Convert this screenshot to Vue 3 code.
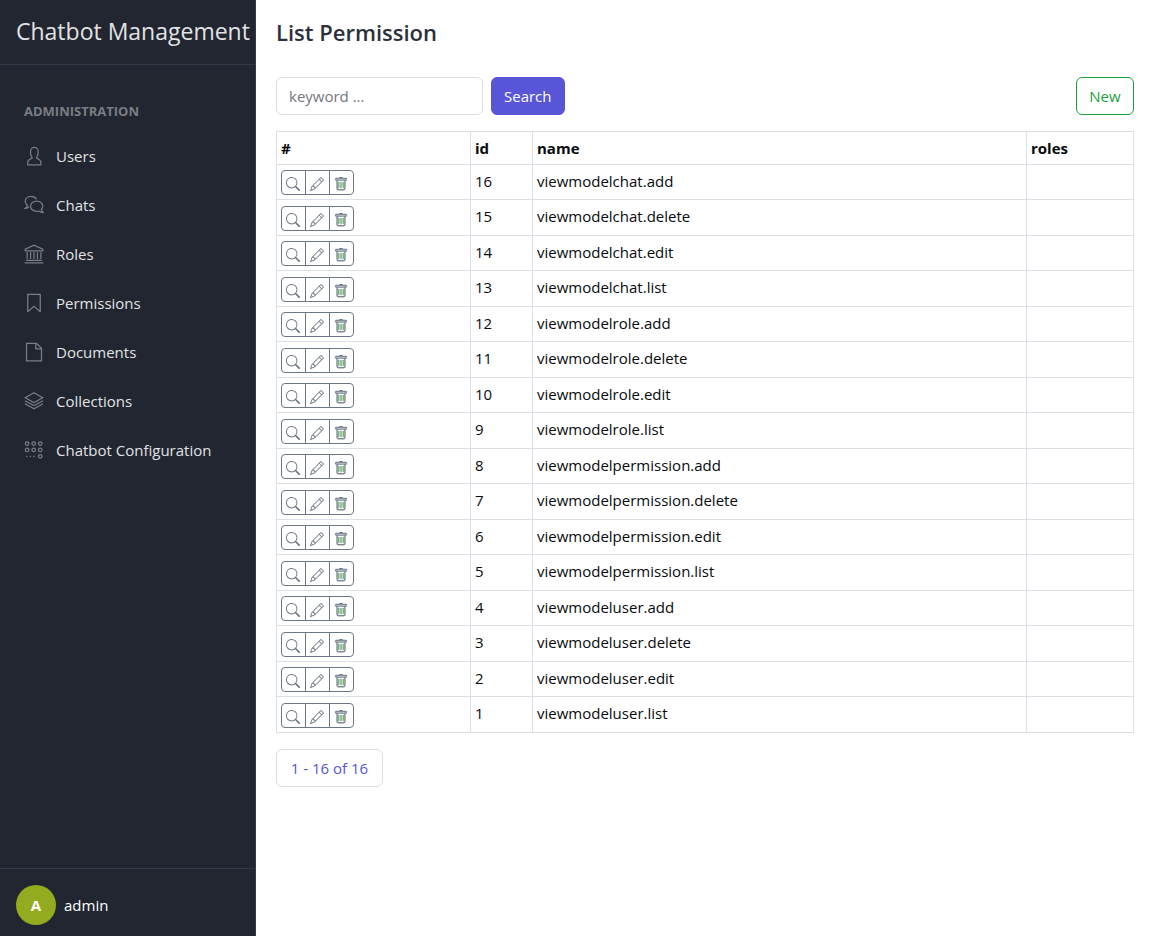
<script setup>
import { ref } from 'vue'

const keyword = ref('')

const menu = [
  { label: 'Users', icon: 'user' },
  { label: 'Chats', icon: 'chat' },
  { label: 'Roles', icon: 'bank' },
  { label: 'Permissions', icon: 'bookmark' },
  { label: 'Documents', icon: 'file' },
  { label: 'Collections', icon: 'layers' },
  { label: 'Chatbot Configuration', icon: 'settings' },
]

const names = [
  'viewmodelchat.add',
  'viewmodelchat.delete',
  'viewmodelchat.edit',
  'viewmodelchat.list',
  'viewmodelrole.add',
  'viewmodelrole.delete',
  'viewmodelrole.edit',
  'viewmodelrole.list',
  'viewmodelpermission.add',
  'viewmodelpermission.delete',
  'viewmodelpermission.edit',
  'viewmodelpermission.list',
  'viewmodeluser.add',
  'viewmodeluser.delete',
  'viewmodeluser.edit',
  'viewmodeluser.list',
]
const rows = names.map((name, i) => ({ id: names.length - i, name, roles: '' }))
</script>

<template>
  <div class="layout">
    <aside class="sidebar">
      <header class="brand">Chatbot Management</header>
      <nav class="nav" aria-label="Administration">
        <div class="nav-title">Administration</div>
        <a v-for="item in menu" :key="item.label" class="nav-link" href="#">
          <svg class="nav-icon" viewBox="0 0 512 512" aria-hidden="true">
            <path
              v-if="item.icon === 'user'"
              class="solid"
              d="M411.6,343.656l-72.823-47.334,27.455-50.334A80.23,80.23,0,0,0,376,207.681V128a112,112,0,0,0-224,0v79.681a80.236,80.236,0,0,0,9.768,38.308l27.455,50.333L116.4,343.656A79.725,79.725,0,0,0,80,410.732V496H448V410.732A79.727,79.727,0,0,0,411.6,343.656ZM416,464H112V410.732a47.836,47.836,0,0,1,21.841-40.246l97.66-63.479-41.64-76.341A48.146,48.146,0,0,1,184,207.681V128a80,80,0,0,1,160,0v79.681a48.146,48.146,0,0,1-5.861,22.985L296.5,307.007l97.662,63.479h0A47.836,47.836,0,0,1,416,410.732Z"
            />
            <g v-else-if="item.icon === 'chat'">
              <path d="M322 108C295 60 242 32 180 32C96 32 32 86 32 158c0 40 18 74 50 98c0 38-14 60-46 84c42 0 72-14 96-38" />
              <path d="M324 154c-88 0-156 58-156 132s68 132 156 132c20 0 38-2 56-8c28 26 62 38 106 38v-14c-28-20-42-44-42-72c24-20 36-46 36-76c0-74-68-132-156-132z" />
            </g>
            <g v-else-if="item.icon === 'bank'">
              <path d="M32 176v-42L256 32l224 102v42z" />
              <path d="M80 208v176M168 208v176M256 208v176M344 208v176M432 208v176M48 416h416M16 480h480" />
            </g>
            <path v-else-if="item.icon === 'bookmark'" d="M96 32h320v440h-10L256 340 106 472H96z" />
            <path v-else-if="item.icon === 'file'" d="M64 32h256l128 128v320H64zM304 32v144h144" />
            <path
              v-else-if="item.icon === 'layers'"
              d="M256 46L482 172 256 298 30 172zM24 248l232 126 232-126M24 326l232 128 232-128"
            />
            <g v-else>
              <circle cx="80" cy="92" r="46" /><circle cx="248" cy="92" r="46" /><circle cx="416" cy="92" r="46" />
              <circle cx="80" cy="254" r="46" /><circle cx="248" cy="254" r="46" /><circle cx="416" cy="254" r="46" />
              <circle cx="416" cy="418" r="46" />
              <path d="M56 418h32M148 418h32M240 418h32" />
            </g>
          </svg>
          <span>{{ item.label }}</span>
        </a>
      </nav>
      <footer class="account">
        <span class="avatar">A</span>
        <span>admin</span>
      </footer>
    </aside>

    <main class="content">
      <h1 class="title">List Permission</h1>
      <form class="toolbar" @submit.prevent>
        <input v-model="keyword" class="field" type="text" placeholder="keyword ..." aria-label="Keyword" />
        <button class="btn primary" type="submit">Search</button>
        <button class="btn success" type="button">New</button>
      </form>

      <table class="grid">
        <colgroup>
          <col class="col-actions" />
          <col class="col-id" />
          <col />
          <col class="col-roles" />
        </colgroup>
        <thead>
          <tr>
            <th scope="col">#</th>
            <th scope="col">id</th>
            <th scope="col">name</th>
            <th scope="col">roles</th>
          </tr>
        </thead>
        <tbody>
          <tr v-for="row in rows" :key="row.id">
            <td>
              <div class="actions">
                <button class="action" type="button" aria-label="View">
                  <svg viewBox="0 0 16 16" aria-hidden="true">
                    <path d="M11.742 10.344a6.5 6.5 0 1 0-1.397 1.398h-.001q.044.06.098.115l3.85 3.85a1 1 0 0 0 1.415-1.414l-3.85-3.85a1 1 0 0 0-.115-.1zM12 6.5a5.5 5.5 0 1 1-11 0 5.5 5.5 0 0 1 11 0" />
                  </svg>
                </button>
                <button class="action" type="button" aria-label="Edit">
                  <svg viewBox="0 0 16 16" aria-hidden="true">
                    <path d="M12.146.146a.5.5 0 0 1 .708 0l3 3a.5.5 0 0 1 0 .708l-10 10a.5.5 0 0 1-.168.11l-5 2a.5.5 0 0 1-.65-.65l2-5a.5.5 0 0 1 .11-.168zM11.207 2.5 13.5 4.793 14.793 3.5 12.5 1.207zm1.586 3L10.5 3.207 4 9.707V10h.5a.5.5 0 0 1 .5.5v.5h.5a.5.5 0 0 1 .5.5v.5h.293zm-9.761 5.175-.106.106-1.528 3.821 3.821-1.528.106-.106A.5.5 0 0 1 5 12.5V12h-.5a.5.5 0 0 1-.5-.5V11h-.5a.5.5 0 0 1-.468-.325z" />
                  </svg>
                </button>
                <button class="action" type="button" aria-label="Delete">
                  <svg viewBox="0 0 16 16" aria-hidden="true">
                    <path class="slats" d="M5.5 5.5A.5.5 0 0 1 6 6v6a.5.5 0 0 1-1 0V6a.5.5 0 0 1 .5-.5m2.5 0a.5.5 0 0 1 .5.5v6a.5.5 0 0 1-1 0V6a.5.5 0 0 1 .5-.5m3 .5a.5.5 0 0 0-1 0v6a.5.5 0 0 0 1 0z" />
                    <path class="can" d="M14.5 3a1 1 0 0 1-1 1H13v9a2 2 0 0 1-2 2H5a2 2 0 0 1-2-2V4h-.5a1 1 0 0 1-1-1V2a1 1 0 0 1 1-1H6a1 1 0 0 1 1-1h2a1 1 0 0 1 1 1h3.5a1 1 0 0 1 1 1zM4.118 4 4 4.059V13a1 1 0 0 0 1 1h6a1 1 0 0 0 1-1V4.059L11.882 4zM2.5 3h11V2h-11z" />
                  </svg>
                </button>
              </div>
            </td>
            <td>{{ row.id }}</td>
            <td>{{ row.name }}</td>
            <td>{{ row.roles }}</td>
          </tr>
        </tbody>
      </table>

      <button class="btn pager" type="button">1 - 16 of 16</button>
    </main>
  </div>
</template>

<style>
body {
  margin: 0;
  background: #fff;
}
</style>

<style scoped>
.layout {
  display: flex;
  min-height: 100vh;
  font-family: 'Segoe UI', 'Open Sans', 'Noto Sans', sans-serif;
  font-size: 15px;
  line-height: 24px;
  color: #080a0c;
}
.layout * {
  box-sizing: border-box;
}
.sidebar {
  display: flex;
  flex-direction: column;
  flex: 0 0 256px;
  box-sizing: border-box;
  border-right: 1px solid #323a49;
  background: #212631;
  color: #e2e3e4;
}
.brand {
  padding: 15px 0 17px 16px;
  border-bottom: 1px solid #323a49;
  font-size: 23px;
  line-height: 32px;
  white-space: nowrap;
}
.nav {
  display: flex;
  flex-direction: column;
  flex: 1;
  padding: 8px;
}
.nav-title {
  margin-top: 16px;
  padding: 12px 16px 10px;
  font-size: 13px;
  font-weight: 700;
  line-height: 20px;
  text-transform: uppercase;
  color: #7a7d83;
}
.nav-link {
  display: flex;
  align-items: center;
  gap: 12px;
  height: 49px;
  padding: 0 16px;
  color: #e2e3e4;
  text-decoration: none;
}
.nav-icon {
  flex: none;
  width: 20px;
  height: 20px;
  fill: none;
  stroke: #7a7d83;
  stroke-width: 32;
}
.nav-icon .solid {
  fill: #7a7d83;
  stroke: none;
}
.account {
  display: flex;
  align-items: center;
  gap: 8px;
  height: 68px;
  padding: 4px 16px 0;
  border-top: 1px solid #323a49;
  color: #fff;
}
.avatar {
  display: flex;
  align-items: center;
  justify-content: center;
  width: 40px;
  height: 40px;
  border-radius: 50%;
  background: #93ab1e;
  font-weight: 700;
}
.content {
  flex: 1;
  min-width: 0;
  padding: 16px 15px 16px 20px;
}
.title {
  margin: 0 0 29px;
  font-size: 22px;
  font-weight: 600;
  line-height: 32px;
  color: #2b303b;
}
.toolbar {
  display: flex;
  gap: 8px;
  margin-bottom: 16px;
}
.field,
.btn {
  height: 38px;
  padding: 0 12px;
  border: 1px solid #dbdfe6;
  border-radius: 6px;
  background: #fff;
  font: inherit;
}
.field {
  width: 207px;
  color: #212631;
}
.field::placeholder {
  color: #747880;
  opacity: 1;
}
.primary {
  border-color: #5856d6;
  background: #5856d6;
  color: #fff;
}
.success {
  min-width: 58px;
  margin-left: auto;
  border-color: #1b9e3e;
  color: #1b9e3e;
}
.grid {
  width: 100%;
  margin-bottom: 16px;
  border-collapse: collapse;
  table-layout: fixed;
}
.col-actions {
  width: 194px;
}
.col-id {
  width: 62px;
}
.col-roles {
  width: 107px;
}
.grid th,
.grid td {
  padding: 4px;
  border: 1px solid #dbdfe6;
  text-align: left;
  vertical-align: top;
}
.grid th {
  font-weight: 700;
}
.grid tbody tr {
  height: 35px;
}
.grid tbody tr:nth-child(even) {
  height: 36px;
}
.actions {
  display: flex;
  padding-top: 1px;
}
.grid tbody tr:nth-child(even) .actions {
  padding-top: 2px;
}
.action {
  display: flex;
  align-items: center;
  justify-content: center;
  width: 25px;
  height: 25px;
  padding: 2px 1px 0 0;
  border: 1px solid #6b7785;
  background: #fff;
  color: #6b7785;
}
.action + .action {
  margin-left: -1px;
}
.action:first-child {
  border-radius: 4px 0 0 4px;
}
.action:last-child {
  border-radius: 0 4px 4px 0;
}
.action svg {
  width: 14px;
  height: 14px;
  fill: currentColor;
}
.action .can {
  stroke: currentColor;
  stroke-width: 0.4;
}
.action .slats {
  fill: #4f9a55;
  stroke: #4f9a55;
  stroke-width: 0.3;
}
.pager {
  min-width: 107px;
  color: #5856d6;
}
</style>
